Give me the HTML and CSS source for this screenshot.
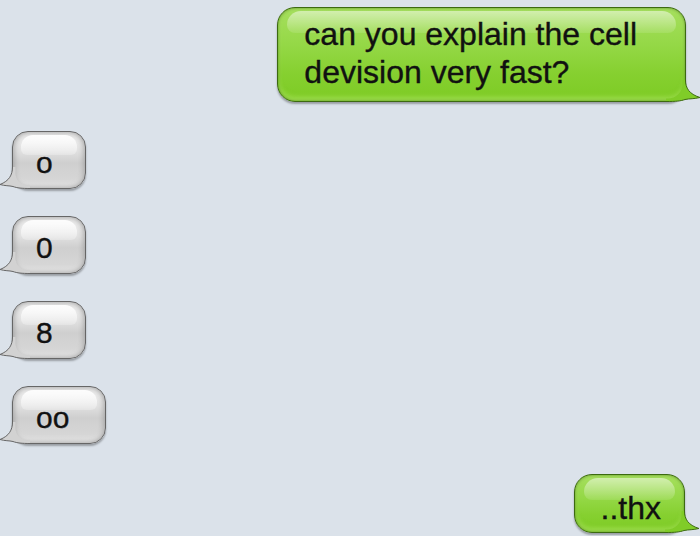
FILE: index.html
```html
<!DOCTYPE html>
<html>
<head>
<meta charset="utf-8">
<link rel="stylesheet" href="styles.css">
</head>
<body>
<div class="chat">
  <div class="bubble green first">
    <span class="txt">can you explain the cell<br>devision very fast?</span>
    <svg class="tail-r" width="36" height="24" viewBox="0 0 36 24"><path class="tf" d="M14.5,2 C14.5,10 11,16 0,19.5 C6,21 10,20.5 15,21.5 C19,23 24,23.5 34,23.5 L34,20.5 L32,20.5 A14.5,14.5 0 0 1 17.5,6 L17.5,2 Z"/><path class="ts" d="M14.5,2 C14.5,10 11,16 0,19.5 C6,21 10,20.5 15,21.5 C19,23 24,23.5 34,23.5"/></svg>
  </div>

  <div class="incoming">
    <div class="bubble gray"><span class="txt">o</span><svg class="tail-l" width="32" height="24" viewBox="0 0 32 24"><path class="tf" d="M12.5,2 C12.5,10 9,16 0,19.5 C5,21 9,20.5 13,21.5 C17,23 22,23.5 30,23.5 L30,20.5 L28,20.5 A12.5,12.5 0 0 1 15.5,8 L15.5,2 Z"/><path class="ts" d="M12.5,2 C12.5,10 9,16 0,19.5 C5,21 9,20.5 13,21.5 C17,23 22,23.5 30,23.5"/></svg></div>
    <div class="bubble gray"><span class="txt">0</span><svg class="tail-l" width="32" height="24" viewBox="0 0 32 24"><path class="tf" d="M12.5,2 C12.5,10 9,16 0,19.5 C5,21 9,20.5 13,21.5 C17,23 22,23.5 30,23.5 L30,20.5 L28,20.5 A12.5,12.5 0 0 1 15.5,8 L15.5,2 Z"/><path class="ts" d="M12.5,2 C12.5,10 9,16 0,19.5 C5,21 9,20.5 13,21.5 C17,23 22,23.5 30,23.5"/></svg></div>
    <div class="bubble gray"><span class="txt">8</span><svg class="tail-l" width="32" height="24" viewBox="0 0 32 24"><path class="tf" d="M12.5,2 C12.5,10 9,16 0,19.5 C5,21 9,20.5 13,21.5 C17,23 22,23.5 30,23.5 L30,20.5 L28,20.5 A12.5,12.5 0 0 1 15.5,8 L15.5,2 Z"/><path class="ts" d="M12.5,2 C12.5,10 9,16 0,19.5 C5,21 9,20.5 13,21.5 C17,23 22,23.5 30,23.5"/></svg></div>
    <div class="bubble gray wide"><span class="txt">oo</span><svg class="tail-l" width="32" height="24" viewBox="0 0 32 24"><path class="tf" d="M12.5,2 C12.5,10 9,16 0,19.5 C5,21 9,20.5 13,21.5 C17,23 22,23.5 30,23.5 L30,20.5 L28,20.5 A12.5,12.5 0 0 1 15.5,8 L15.5,2 Z"/><path class="ts" d="M12.5,2 C12.5,10 9,16 0,19.5 C5,21 9,20.5 13,21.5 C17,23 22,23.5 30,23.5"/></svg></div>
  </div>

  <div class="bubble green last">
    <span class="txt">..thx</span>
    <svg class="tail-r" width="36" height="24" viewBox="0 0 36 24"><path class="tf" d="M14.5,2 C14.5,10 11,16 0,19.5 C6,21 10,20.5 15,21.5 C19,23 24,23.5 34,23.5 L34,20.5 L32,20.5 A14.5,14.5 0 0 1 17.5,6 L17.5,2 Z"/><path class="ts" d="M14.5,2 C14.5,10 11,16 0,19.5 C6,21 10,20.5 15,21.5 C19,23 24,23.5 34,23.5"/></svg>
  </div>
</div>
</body>
</html>
```
FILE: styles.css
```css
html, body {
  margin: 0;
  padding: 0;
}
body {
  background: #dbe2ea;
  font-family: "Liberation Sans", Arial, Helvetica, sans-serif;
  color: #111;
  width: 700px;
  height: 536px;
  overflow: hidden;
}
.chat {
  display: flex;
  flex-direction: column;
  padding: 7px 14px 0 0;
}
.bubble {
  position: relative;
  box-sizing: border-box;
}
.bubble::before {
  content: "";
  position: absolute;
  z-index: 0;
}
.txt {
  position: relative;
  z-index: 1;
  -webkit-text-stroke: 0.35px #111;
}
.green {
  align-self: flex-end;
  font-size: 32px;
  line-height: 38px;
  border: 1px solid #3c6a10;
  border-radius: 18px;
  background: linear-gradient(#a6df5e 0%, #94d846 40%, #86d030 70%, #7dcb24 100%);
  box-shadow: inset 0 0 3px rgba(40, 80, 0, .55), inset 0 -4px 5px rgba(190, 240, 120, .5), 0 2px 2px rgba(0, 0, 0, .3);
}
.green::before {
  top: 3px;
  left: 9px;
  right: 9px;
  height: 22px;
  border-radius: 14px 14px 8px 8px;
  background: linear-gradient(rgba(255, 255, 255, .5), rgba(255, 255, 255, .1));
}
.green.first {
  padding: 7px 48px 10px 26px;
}
.green.last {
  margin-top: 30px;
  margin-right: 1px;
  padding: 8px 23px 0 26px;
  height: 59px;
  line-height: 51px;
}
.incoming {
  display: flex;
  flex-direction: column;
  align-items: flex-start;
  gap: 27px;
  margin-top: 29px;
  padding-left: 12px;
}
.gray {
  height: 58px;
  padding: 3px 32px 0 23px;
  font-size: 30px;
  line-height: 55px;
  border: 1px solid #666;
  border-radius: 16px;
  background: linear-gradient(#f2f2f2 0%, #e0e0e0 35%, #cfcfcf 55%, #d6d6d6 85%, #e0e0e0 100%);
  box-shadow: inset 0 0 6px rgba(0, 0, 0, .42), inset 0 -4px 5px rgba(255, 255, 255, .55), 0 2px 2px rgba(0, 0, 0, .3);
}
.gray::before {
  top: 3px;
  left: 8px;
  right: 8px;
  height: 20px;
  border-radius: 12px 12px 6px 6px;
  background: linear-gradient(rgba(255, 255, 255, .92), rgba(255, 255, 255, .25));
}
.gray.wide {
  padding: 3px 36px 0 23px;
}
.tail-l {
  position: absolute;
  left: -13px;
  bottom: -1px;
  z-index: 2;
  overflow: visible;
}
.tail-r {
  position: absolute;
  right: -15px;
  bottom: -1px;
  z-index: 2;
  transform: scaleX(-1);
  overflow: visible;
}
.tail-l .tf {
  fill: #d2d2d2;
}
.tail-l .ts {
  fill: none;
  stroke: #666;
  stroke-width: 1;
}
.tail-r .tf {
  fill: #80cc28;
}
.tail-r .ts {
  fill: none;
  stroke: #3c6a10;
  stroke-width: 1;
}
```
